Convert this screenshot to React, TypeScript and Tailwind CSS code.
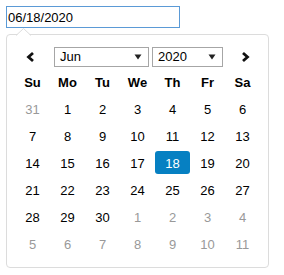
import React from 'react';

const WEEKDAYS = ['Su', 'Mo', 'Tu', 'We', 'Th', 'Fr', 'Sa'];

// 6 rows, out-of-month days flagged
const DAYS: { d: number; out?: boolean }[] = [
  { d: 31, out: true },
  ...Array.from({ length: 30 }, (_, i) => ({ d: i + 1 })),
  ...Array.from({ length: 11 }, (_, i) => ({ d: i + 1, out: true })),
];

const Caret = () => (
  <svg width="8" height="6" viewBox="0 0 8 6">
    <polygon points="0.5,0.5 7.5,0.5 4,5.5" fill="#222" />
  </svg>
);

const Chevron = ({ dir }: { dir: 'left' | 'right' }) => (
  <svg width="9" height="12" viewBox="0 0 9 12">
    <polyline
      points={dir === 'left' ? '7,2 2.5,6 7,10' : '2,2 6.5,6 2,10'}
      fill="none"
      stroke="#111"
      strokeWidth="2.8"
    />
  </svg>
);

const FakeSelect = ({ value, width }: { value: string; width: string }) => (
  <div className={`${width} h-[20px] border border-[#a6a6a6] bg-white flex items-center justify-between pl-[5px] pr-[6px] text-black`}>
    <span>{value}</span>
    <Caret />
  </div>
);

export default function App() {
  return (
    <div className="p-[6px] font-['Liberation_Sans',Arial,sans-serif] text-[13px] text-[#222] bg-white min-h-screen">
      <input
        type="text"
        defaultValue="06/18/2020"
        className="block w-[174px] h-[22px] border border-[#5b9ad6] pl-[1px] text-[13px] text-black outline-none"
      />

      <div className="relative mt-[6px] w-[263px] h-[234px] border border-[#dcdcdc] rounded-[4px] bg-white px-2 pt-[12px] pb-[11px]">
        {/* caret pointing at the input */}
        <svg className="absolute -top-[7px] left-[9px]" width="15" height="8" viewBox="0 0 15 8">
          <polygon points="0,8 7.5,0.5 15,8" fill="white" />
          <polyline points="0,7.5 7.5,0.5 15,7.5" fill="none" stroke="#dcdcdc" strokeWidth="1" />
        </svg>

        {/* nav */}
        <div className="flex items-center h-[20px]">
          <div className="w-[30px] flex justify-center">
            <Chevron dir="left" />
          </div>
          <div className="ml-[9px]">
            <FakeSelect value="Jun" width="w-[95px]" />
          </div>
          <div className="ml-[3px]">
            <FakeSelect value="2020" width="w-[71px]" />
          </div>
          <div className="ml-[7px] w-[30px] flex justify-center">
            <Chevron dir="right" />
          </div>
        </div>

        {/* calendar grid */}
        <div className="mt-[3px] grid grid-cols-[repeat(7,35px)] gap-y-[4px]">
          {WEEKDAYS.map((w) => (
            <div key={w} className="h-[23px] pt-[2px] leading-[21px] text-center font-bold text-black">
              {w}
            </div>
          ))}
          {DAYS.map((day, i) => {
            const selected = !day.out && day.d === 18;
            return (
              <div
                key={i}
                className={
                  'h-[23px] pt-[2px] leading-[21px] text-center rounded-[3px] ' +
                  (selected ? 'bg-[#0680c2] text-white' : day.out ? 'text-[#999]' : 'text-black')
                }
              >
                {day.d}
              </div>
            );
          })}
        </div>
      </div>
    </div>
  );
}
